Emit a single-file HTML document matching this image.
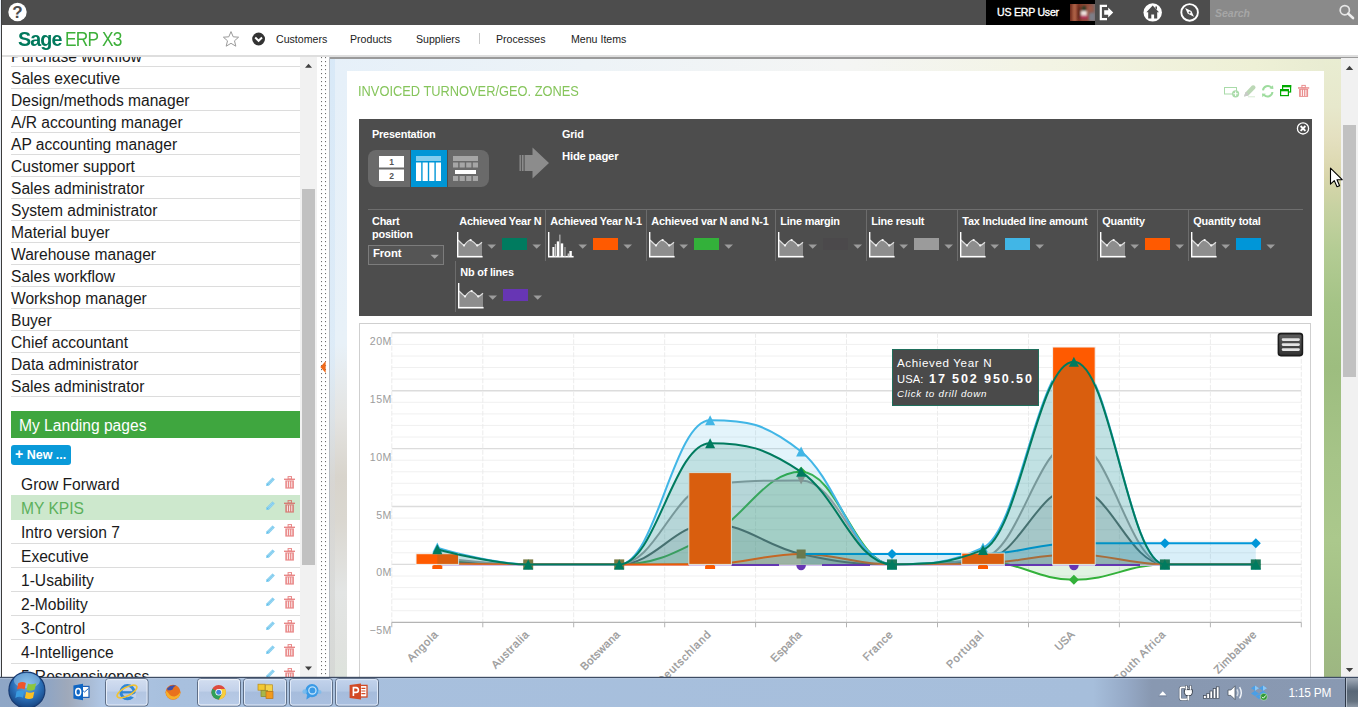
<!DOCTYPE html>
<html><head><meta charset="utf-8"><title>Sage ERP X3</title>
<style>
*{box-sizing:border-box;margin:0;padding:0}
html,body{width:1358px;height:707px;overflow:hidden;background:#fff;font-family:"Liberation Sans",sans-serif;}
body{position:relative}
.abs{position:absolute}
svg{position:absolute;overflow:visible}
#edge0{left:0;top:0;width:1px;height:677px;background:#e8eef6}
#edge1{left:1px;top:0;width:1px;height:677px;background:#3c3c3c}
#topbar{left:2px;top:0;width:1356px;height:25px;background:#4d4d4d}
#user{left:986px;top:0;width:109px;height:25px;background:#000;color:#fff;font-size:10.6px;-webkit-text-stroke:0.35px #fff;line-height:25px;padding-left:11px;letter-spacing:-0.25px}
#search{left:1210px;top:0;width:148px;height:25px;background:#8a8a8a;color:#a6a6a6;font-size:10.5px;font-style:italic;font-weight:bold;line-height:26px;padding-left:5px}
#nav{left:2px;top:25px;width:1356px;height:30px;background:#fff}
#navline{left:2px;top:55px;width:1356px;height:2px;background:#dedede}
.nv{position:absolute;top:33px;font-size:10.6px;color:#222;line-height:13px;white-space:nowrap}
#left{left:2px;top:57px;width:298px;height:620px;background:#fff;overflow:hidden}
.li{position:absolute;left:9px;width:289px;height:22px;border-bottom:1px solid #dcdcdc;font-size:15.6px;line-height:23.2px;color:#1a1a1a;white-space:nowrap}
.lp{position:absolute;left:9px;width:289px;height:24px;border-bottom:1px solid #dcdcdc;font-size:15.6px;line-height:25.6px;color:#1a1a1a;padding-left:10px;white-space:nowrap}
#lsb{left:300px;top:57px;width:17px;height:620px;background:#f1f1f1}
#lthumb{left:302px;top:189px;width:13px;height:376px;background:#c1c1c1}
#split{left:317px;top:57px;width:12px;height:620px;background:#fff}
#main{left:329px;top:57px;width:1029px;height:620px;overflow:hidden;background:#eef3f6}
#taskbar{left:0;top:677px;width:1358px;height:30px;background:#a9c0dd}
</style></head>
<body>
<div id="edge0" class="abs"></div><div id="edge1" class="abs"></div>
<div id="topbar" class="abs"></div>
<!-- help icon -->
<svg style="left:8px;top:2px" width="20" height="20" viewBox="0 0 20 20"><circle cx="9.5" cy="10" r="9.2" fill="#fff"/><text x="9.5" y="16" text-anchor="middle" font-family="Liberation Sans" font-weight="bold" font-size="17" fill="#4d4d4d">?</text></svg>
<div id="user" class="abs">US ERP User</div>
<!-- avatar -->
<svg style="left:1070px;top:4px;overflow:hidden" width="25" height="17" viewBox="0 0 25 17"><defs><linearGradient id="av" x1="0" x2="1"><stop offset="0" stop-color="#6e2a1c"/><stop offset=".2" stop-color="#a55a40"/><stop offset=".35" stop-color="#7a3324"/><stop offset=".5" stop-color="#8a4432"/><stop offset=".75" stop-color="#8e4c3c"/><stop offset="1" stop-color="#7d6a68"/></linearGradient><filter id="avb" x="-20%" y="-20%" width="140%" height="140%"><feGaussianBlur stdDeviation="0.9"/></filter></defs><rect width="25" height="17" fill="url(#av)"/><g filter="url(#avb)"><rect x="3" y="0" width="2" height="17" fill="#b8694c" opacity=".7"/><rect x="8" y="3" width="3" height="12" fill="#5a2418" opacity=".8"/><rect x="12" y="2" width="4" height="6" fill="#2e3a24"/><rect x="11" y="7" width="6" height="5" fill="#efe2de"/><rect x="10.5" y="11.5" width="7.5" height="3.5" fill="#b03058"/><rect x="19" y="9" width="6" height="8" fill="#7d7e88"/><rect x="18" y="2" width="5" height="6" fill="#9a5a48"/></g></svg>
<!-- logout -->
<svg style="left:1099px;top:4px" width="16" height="17" viewBox="0 0 16 17"><path d="M8 1.8H1.8V15.2H8" fill="none" stroke="#fff" stroke-width="2.2"/><path d="M5.2 6.2H9.2V3.6L14.2 8.5L9.2 13.4V10.8H5.2Z" fill="#fff"/></svg>
<!-- home -->
<svg style="left:1143px;top:3px" width="20" height="20" viewBox="0 0 20 20"><circle cx="9.7" cy="9.4" r="9.2" fill="#fff"/><path d="M9.7 2.6L3.4 9.2H5.2V15.6H8.3V11.6H11.1V15.6H14.2V9.2H16Z M12.4 3.4h1.6v3.2l-1.6-1.6z" fill="#4d4d4d"/></svg>
<!-- compass -->
<svg style="left:1180px;top:3px" width="20" height="20" viewBox="0 0 20 20"><circle cx="9.6" cy="9.4" r="8.3" fill="none" stroke="#fff" stroke-width="1.9"/><path d="M5.2 5L11.4 8L14 13.8L7.8 10.8Z" fill="#fff"/><circle cx="9.6" cy="9.4" r="1" fill="#4d4d4d"/></svg>
<div id="search" class="abs">Search</div>
<svg style="left:1336px;top:3px" width="20" height="18" viewBox="0 0 20 18"><circle cx="8.8" cy="7.2" r="4.6" fill="none" stroke="#e6e6e6" stroke-width="1.7"/><path d="M12.2 10.6L17 15" stroke="#eee" stroke-width="2.6" stroke-linecap="round"/></svg>
<div id="nav" class="abs"></div>
<div id="navline" class="abs"></div>
<!-- logo -->
<div class="abs" style="left:17.5px;top:27px;font-size:20px;line-height:24px;white-space:nowrap;letter-spacing:-0.9px;font-weight:bold;color:#00795c;transform:scaleX(.985);transform-origin:0 0">Sage</div>
<div class="abs" style="left:65px;top:27px;font-size:20px;line-height:24px;white-space:nowrap;letter-spacing:-0.9px;color:#3db03a;transform:scaleX(.865);transform-origin:0 0">ERP X3</div>
<!-- star -->
<svg style="left:222px;top:30px" width="18" height="18" viewBox="0 0 18 18"><path d="M9 1.6L11.2 6.8L16.6 7.2L12.5 10.8L13.8 16.2L9 13.3L4.2 16.2L5.5 10.8L1.4 7.2L6.8 6.8Z" fill="#fff" stroke="#9a9a9a" stroke-width="1"/></svg>
<!-- check circle -->
<svg style="left:252px;top:32px" width="14" height="14" viewBox="0 0 14 14"><circle cx="6.6" cy="7" r="6.4" fill="#333"/><path d="M3.2 5.6L6.6 8.8L10 5.6" fill="none" stroke="#fff" stroke-width="2"/></svg>
<div class="nv" style="left:276px">Customers</div>
<div class="nv" style="left:350px">Products</div>
<div class="nv" style="left:416px">Suppliers</div>
<div class="abs" style="left:479px;top:33px;width:1px;height:11px;background:#c8c8c8"></div>
<div class="nv" style="left:496px">Processes</div>
<div class="nv" style="left:571px">Menu Items</div>
<div id="left" class="abs">
<div class="li" style="top:-12px">Purchase workflow</div>
<div class="li" style="top:10px">Sales executive</div>
<div class="li" style="top:32px">Design/methods manager</div>
<div class="li" style="top:54px">A/R accounting manager</div>
<div class="li" style="top:76px">AP accounting manager</div>
<div class="li" style="top:98px">Customer support</div>
<div class="li" style="top:120px">Sales administrator</div>
<div class="li" style="top:142px">System administrator</div>
<div class="li" style="top:164px">Material buyer</div>
<div class="li" style="top:186px">Warehouse manager</div>
<div class="li" style="top:208px">Sales workflow</div>
<div class="li" style="top:230px">Workshop manager</div>
<div class="li" style="top:252px">Buyer</div>
<div class="li" style="top:274px">Chief accountant</div>
<div class="li" style="top:296px">Data administrator</div>
<div class="li" style="top:318px">Sales administrator</div>
<div class="abs" style="left:9px;top:354px;width:289px;height:27px;background:#3fa63f;color:#fff;font-size:15.6px;line-height:29px;padding-left:8px">My Landing pages</div>
<div class="abs" style="left:9px;top:388px;width:60px;height:20px;background:#0a9ad9;color:#fff;font-size:12.5px;font-weight:bold;line-height:19px;padding-left:4px;border-radius:3px;white-space:nowrap"><span style="font-size:14px">+</span> New ...</div>
<div class="lp" style="top:415px;border-bottom-color:#fff;">Grow Forward</div>
<svg style="left:263.2px;top:419px" width="11" height="11" viewBox="0 0 11 11"><path d="M1 10L1.8 7.2L7.6 1.4L9.8 3.6L4 9.4Z" fill="#5bbdea"/><path d="M2.6 7.8L8.2 2.2M3.6 8.8L9.2 3.2" stroke="#fff" stroke-width=".6"/><path d="M1 10L1.5 8.2L2.8 9.5Z" fill="#9adbf5"/></svg>
<svg style="left:282px;top:419px" width="11" height="13" viewBox="0 0 11 13"><rect x="4.1" y="0.6" width="3.4" height="2.4" fill="none" stroke="#e98888" stroke-width="1"/><path d="M0 2.6H11V4H0Z" fill="#e98888"/><path d="M1.3 4.4H9.9V12.6H1.3Z" fill="#e98888"/><path d="M3.4 5.4V11.4M5.6 5.4V11.4M7.8 5.4V11.4" stroke="#fff" stroke-width="0.9" opacity=".95"/></svg>
<div class="lp" style="top:438px;height:25px;background:#cde8cd;color:#5cb05c;border-bottom-color:#cde8cd;line-height:27.6px">MY KPIS</div>
<svg style="left:263.2px;top:443px" width="11" height="11" viewBox="0 0 11 11"><path d="M1 10L1.8 7.2L7.6 1.4L9.8 3.6L4 9.4Z" fill="#5bbdea"/><path d="M2.6 7.8L8.2 2.2M3.6 8.8L9.2 3.2" stroke="#fff" stroke-width=".6"/><path d="M1 10L1.5 8.2L2.8 9.5Z" fill="#9adbf5"/></svg>
<svg style="left:282px;top:443px" width="11" height="13" viewBox="0 0 11 13"><rect x="4.1" y="0.6" width="3.4" height="2.4" fill="none" stroke="#d67e76" stroke-width="1"/><path d="M0 2.6H11V4H0Z" fill="#d67e76"/><path d="M1.3 4.4H9.9V12.6H1.3Z" fill="#d67e76"/><path d="M3.4 5.4V11.4M5.6 5.4V11.4M7.8 5.4V11.4" stroke="#fff" stroke-width="0.9" opacity=".95"/></svg>
<div class="lp" style="top:463px;">Intro version 7</div>
<svg style="left:263.2px;top:467px" width="11" height="11" viewBox="0 0 11 11"><path d="M1 10L1.8 7.2L7.6 1.4L9.8 3.6L4 9.4Z" fill="#5bbdea"/><path d="M2.6 7.8L8.2 2.2M3.6 8.8L9.2 3.2" stroke="#fff" stroke-width=".6"/><path d="M1 10L1.5 8.2L2.8 9.5Z" fill="#9adbf5"/></svg>
<svg style="left:282px;top:467px" width="11" height="13" viewBox="0 0 11 13"><rect x="4.1" y="0.6" width="3.4" height="2.4" fill="none" stroke="#e98888" stroke-width="1"/><path d="M0 2.6H11V4H0Z" fill="#e98888"/><path d="M1.3 4.4H9.9V12.6H1.3Z" fill="#e98888"/><path d="M3.4 5.4V11.4M5.6 5.4V11.4M7.8 5.4V11.4" stroke="#fff" stroke-width="0.9" opacity=".95"/></svg>
<div class="lp" style="top:487px;">Executive</div>
<svg style="left:263.2px;top:491px" width="11" height="11" viewBox="0 0 11 11"><path d="M1 10L1.8 7.2L7.6 1.4L9.8 3.6L4 9.4Z" fill="#5bbdea"/><path d="M2.6 7.8L8.2 2.2M3.6 8.8L9.2 3.2" stroke="#fff" stroke-width=".6"/><path d="M1 10L1.5 8.2L2.8 9.5Z" fill="#9adbf5"/></svg>
<svg style="left:282px;top:491px" width="11" height="13" viewBox="0 0 11 13"><rect x="4.1" y="0.6" width="3.4" height="2.4" fill="none" stroke="#e98888" stroke-width="1"/><path d="M0 2.6H11V4H0Z" fill="#e98888"/><path d="M1.3 4.4H9.9V12.6H1.3Z" fill="#e98888"/><path d="M3.4 5.4V11.4M5.6 5.4V11.4M7.8 5.4V11.4" stroke="#fff" stroke-width="0.9" opacity=".95"/></svg>
<div class="lp" style="top:511px;">1-Usability</div>
<svg style="left:263.2px;top:515px" width="11" height="11" viewBox="0 0 11 11"><path d="M1 10L1.8 7.2L7.6 1.4L9.8 3.6L4 9.4Z" fill="#5bbdea"/><path d="M2.6 7.8L8.2 2.2M3.6 8.8L9.2 3.2" stroke="#fff" stroke-width=".6"/><path d="M1 10L1.5 8.2L2.8 9.5Z" fill="#9adbf5"/></svg>
<svg style="left:282px;top:515px" width="11" height="13" viewBox="0 0 11 13"><rect x="4.1" y="0.6" width="3.4" height="2.4" fill="none" stroke="#e98888" stroke-width="1"/><path d="M0 2.6H11V4H0Z" fill="#e98888"/><path d="M1.3 4.4H9.9V12.6H1.3Z" fill="#e98888"/><path d="M3.4 5.4V11.4M5.6 5.4V11.4M7.8 5.4V11.4" stroke="#fff" stroke-width="0.9" opacity=".95"/></svg>
<div class="lp" style="top:535px;">2-Mobility</div>
<svg style="left:263.2px;top:539px" width="11" height="11" viewBox="0 0 11 11"><path d="M1 10L1.8 7.2L7.6 1.4L9.8 3.6L4 9.4Z" fill="#5bbdea"/><path d="M2.6 7.8L8.2 2.2M3.6 8.8L9.2 3.2" stroke="#fff" stroke-width=".6"/><path d="M1 10L1.5 8.2L2.8 9.5Z" fill="#9adbf5"/></svg>
<svg style="left:282px;top:539px" width="11" height="13" viewBox="0 0 11 13"><rect x="4.1" y="0.6" width="3.4" height="2.4" fill="none" stroke="#e98888" stroke-width="1"/><path d="M0 2.6H11V4H0Z" fill="#e98888"/><path d="M1.3 4.4H9.9V12.6H1.3Z" fill="#e98888"/><path d="M3.4 5.4V11.4M5.6 5.4V11.4M7.8 5.4V11.4" stroke="#fff" stroke-width="0.9" opacity=".95"/></svg>
<div class="lp" style="top:559px;">3-Control</div>
<svg style="left:263.2px;top:563px" width="11" height="11" viewBox="0 0 11 11"><path d="M1 10L1.8 7.2L7.6 1.4L9.8 3.6L4 9.4Z" fill="#5bbdea"/><path d="M2.6 7.8L8.2 2.2M3.6 8.8L9.2 3.2" stroke="#fff" stroke-width=".6"/><path d="M1 10L1.5 8.2L2.8 9.5Z" fill="#9adbf5"/></svg>
<svg style="left:282px;top:563px" width="11" height="13" viewBox="0 0 11 13"><rect x="4.1" y="0.6" width="3.4" height="2.4" fill="none" stroke="#e98888" stroke-width="1"/><path d="M0 2.6H11V4H0Z" fill="#e98888"/><path d="M1.3 4.4H9.9V12.6H1.3Z" fill="#e98888"/><path d="M3.4 5.4V11.4M5.6 5.4V11.4M7.8 5.4V11.4" stroke="#fff" stroke-width="0.9" opacity=".95"/></svg>
<div class="lp" style="top:583px;">4-Intelligence</div>
<svg style="left:263.2px;top:587px" width="11" height="11" viewBox="0 0 11 11"><path d="M1 10L1.8 7.2L7.6 1.4L9.8 3.6L4 9.4Z" fill="#5bbdea"/><path d="M2.6 7.8L8.2 2.2M3.6 8.8L9.2 3.2" stroke="#fff" stroke-width=".6"/><path d="M1 10L1.5 8.2L2.8 9.5Z" fill="#9adbf5"/></svg>
<svg style="left:282px;top:587px" width="11" height="13" viewBox="0 0 11 13"><rect x="4.1" y="0.6" width="3.4" height="2.4" fill="none" stroke="#e98888" stroke-width="1"/><path d="M0 2.6H11V4H0Z" fill="#e98888"/><path d="M1.3 4.4H9.9V12.6H1.3Z" fill="#e98888"/><path d="M3.4 5.4V11.4M5.6 5.4V11.4M7.8 5.4V11.4" stroke="#fff" stroke-width="0.9" opacity=".95"/></svg>
<div class="lp" style="top:607px;">5-Responsiveness</div>
<svg style="left:263.2px;top:611px" width="11" height="11" viewBox="0 0 11 11"><path d="M1 10L1.8 7.2L7.6 1.4L9.8 3.6L4 9.4Z" fill="#5bbdea"/><path d="M2.6 7.8L8.2 2.2M3.6 8.8L9.2 3.2" stroke="#fff" stroke-width=".6"/><path d="M1 10L1.5 8.2L2.8 9.5Z" fill="#9adbf5"/></svg>
<svg style="left:282px;top:611px" width="11" height="13" viewBox="0 0 11 13"><rect x="4.1" y="0.6" width="3.4" height="2.4" fill="none" stroke="#e98888" stroke-width="1"/><path d="M0 2.6H11V4H0Z" fill="#e98888"/><path d="M1.3 4.4H9.9V12.6H1.3Z" fill="#e98888"/><path d="M3.4 5.4V11.4M5.6 5.4V11.4M7.8 5.4V11.4" stroke="#fff" stroke-width="0.9" opacity=".95"/></svg>
</div>
<div id="lsb" class="abs"></div><div id="lthumb" class="abs"></div>
<svg style="left:300px;top:57px" width="17" height="620"><path d="M5 10.8L8.5 6.8L12 10.8Z" fill="#404040"/><path d="M5 609.4L8.5 613.4L12 609.4Z" fill="#404040"/></svg>
<div id="split" class="abs"></div>
<svg style="left:317px;top:57px" width="12" height="620"><defs><pattern id="dots" x="0" y="0" width="4" height="4" patternUnits="userSpaceOnUse"><rect x="0" y="0" width="1.15" height="1.15" fill="#6c6c6c"/></pattern></defs><rect x="4" y="0" width="1.3" height="620" fill="url(#dots)"/><rect x="8" y="0" width="1.3" height="620" fill="url(#dots)"/><path d="M8.6 304L3.4 310L8.6 316Z" fill="#f06a1a"/></svg>
<div id="main" class="abs">
<div class="abs" style="left:0;top:0;width:1029px;height:620px;background:linear-gradient(90deg,#e6f0f9 0%,#edf3f7 25%,#f4f5f4 50%,#f3f4e4 70%,#eef0d6 90%,#e6ead0 100%)"></div>
<div class="abs" style="left:0;top:14px;width:18px;height:606px;background:linear-gradient(180deg,#e6f0f9 0%,#e8f1f8 45%,#e4e4e2 57%,#d8d4cc 67%,#dad7d0 74%,#e3e5e4 86%,#e0e2df 95%,#dde3dc 100%)"></div>
<div class="abs" style="left:0;top:0;width:6px;height:620px;background:linear-gradient(180deg,rgba(215,232,247,.9),rgba(215,232,247,.6) 50%,rgba(214,214,214,.5) 70%,rgba(212,214,212,.8))"></div>
<div class="abs" style="left:995px;top:0;width:17px;height:620px;background:linear-gradient(180deg,#e9edd2 0%,#e7e8cc 8%,#e4e0c0 13%,#dad6ac 19%,#c8d2a2 24%,#b4cc94 31%,#a4c386 40%,#9dbd7f 50%,#a6c488 65%,#abc88c 78%,#a2bf84 90%,#9db682 100%)"></div>
<div class="abs" style="left:0;top:0;width:1029px;height:1.8px;background:#9a9a9a"></div>
<div class="abs" style="left:0;top:0;width:1px;height:620px;background:#b9bec4"></div>
<!-- white panel -->
<div class="abs" style="left:18px;top:14px;width:977px;height:606px;background:#fff"></div>
<!-- right scrollbar -->
<div class="abs" style="left:1012px;top:1px;width:17px;height:620px;background:#f1f1f1"></div>
<div class="abs" style="left:1014px;top:68px;width:13px;height:252px;background:#c1c1c1"></div>
<svg style="left:1012px;top:0" width="17" height="619"><path d="M4.8 13L8.5 8.8L12.2 13Z" fill="#404040"/><path d="M4.8 611L8.5 615L12.2 611Z" fill="#404040"/></svg>
</div>
<div class="abs" style="left:358px;top:83px;font-size:14.3px;line-height:17.6px;color:#86c55c;white-space:nowrap;transform:scaleX(.898);transform-origin:0 0">INVOICED TURNOVER/GEO. ZONES</div>
<svg style="left:1223px;top:84px" width="16" height="14" viewBox="0 0 16 14"><rect x="1.5" y="3.5" width="12" height="6.5" fill="#fff" stroke="#a9dba9" stroke-width="1"/><circle cx="12.6" cy="9.8" r="3.6" fill="#a9dba9"/><path d="M12.6 7.6V12M10.4 9.8H14.8" stroke="#fff" stroke-width="1.1"/></svg>
<svg style="left:1243px;top:84px" width="14" height="14" viewBox="0 0 14 14"><path d="M1 12.6L2.4 8.4L9 1.6Q10.6 0.6 12 2Q13.2 3.4 12 4.8L5.4 11.6Z" fill="#bcd8b6"/><path d="M1 12.6L2.4 8.4L4 8L5 10L5.4 11.6Z" fill="#c9c9c9"/><path d="M5 12.8H12" stroke="#d6ead2" stroke-width="1"/></svg>
<svg style="left:1261px;top:84px" width="14" height="14" viewBox="0 0 14 14"><path d="M2 6.4A4.8 4.8 0 0 1 10.4 3.6" fill="none" stroke="#9edc9e" stroke-width="2"/><path d="M8.6 4.6L12.4 5L12 1.2Z" fill="#9edc9e"/><path d="M11.4 8A4.8 4.8 0 0 1 3 10.8" fill="none" stroke="#9edc9e" stroke-width="2"/><path d="M4.8 9.8L1 9.4L1.4 13.2Z" fill="#9edc9e"/></svg>
<svg style="left:1279px;top:84px" width="14" height="14" viewBox="0 0 14 14"><rect x="3.6" y="1.6" width="8" height="6.4" fill="#fff" stroke="#0a0" stroke-width="1.2"/><rect x="3" y="1" width="9.2" height="2.3" fill="#0a0"/><rect x="1.6" y="5.6" width="7.8" height="6" fill="#fff" stroke="#0a0" stroke-width="1.2"/><rect x="1" y="5" width="9" height="2.3" fill="#0a0"/></svg>
<svg style="left:1297px;top:84px" width="14" height="14" viewBox="0 0 14 14"><rect x="4.9" y="1.4" width="3.4" height="2.4" fill="none" stroke="#ea8f8f" stroke-width="1"/><path d="M1 3.2H12.2V4.7H1Z" fill="#ea8f8f"/><path d="M2.1 5H11.1V12.9H2.1Z" fill="#ea8f8f"/><path d="M4.3 5.8V12M6.6 5.8V12M8.9 5.8V12" stroke="#fff" stroke-width="1"/></svg>
<div class="abs" style="left:359px;top:119px;width:953px;height:197px;background:#4d4d4d"></div>
<svg style="left:1295px;top:121px" width="16" height="16" viewBox="0 0 16 16"><circle cx="8" cy="7.4" r="5.6" fill="none" stroke="#fff" stroke-width="1.3"/><path d="M5.6 5L10.4 9.8M10.4 5L5.6 9.8" stroke="#fff" stroke-width="1.9"/></svg>
<div style="position:absolute;color:#fff;font-weight:bold;font-size:10.9px;line-height:13px;white-space:nowrap;letter-spacing:-0.2px;left:372px;top:128px">Presentation</div>
<div style="position:absolute;color:#fff;font-weight:bold;font-size:10.9px;line-height:13px;white-space:nowrap;letter-spacing:-0.2px;left:562px;top:128px">Grid</div>
<div style="position:absolute;color:#fff;font-weight:bold;font-size:10.9px;line-height:13px;white-space:nowrap;letter-spacing:-0.2px;left:562px;top:150px;font-size:11.3px">Hide pager</div>
<div class="abs" style="left:368px;top:150px;width:121px;height:37px;background:#6a6a6a;border-radius:8px;overflow:hidden">
<div class="abs" style="left:42px;top:0;width:1px;height:37px;background:#4d4d4d"></div>
<div class="abs" style="left:43px;top:0;width:36px;height:37px;background:#0096d6"></div>
<div class="abs" style="left:79px;top:0;width:1px;height:37px;background:#4d4d4d"></div>
</div>
<svg style="left:368px;top:150px" width="121" height="37" viewBox="0 0 121 37">
<rect x="11" y="6" width="25" height="11.5" fill="#fff"/><rect x="11" y="19.5" width="25" height="11.5" fill="#fff"/>
<text x="23.5" y="15.2" text-anchor="middle" font-family="Liberation Sans" font-weight="bold" font-size="8.5" fill="#555">1</text>
<text x="23.5" y="28.7" text-anchor="middle" font-family="Liberation Sans" font-weight="bold" font-size="8.5" fill="#555">2</text>
<rect x="48" y="6" width="25" height="5" fill="#82cdee"/>
<rect x="48" y="12.5" width="5.2" height="18.5" fill="#fff"/><rect x="54.6" y="12.5" width="5.2" height="18.5" fill="#fff"/><rect x="61.2" y="12.5" width="5.2" height="18.5" fill="#fff"/><rect x="67.8" y="12.5" width="5.2" height="18.5" fill="#fff"/>
<rect x="85" y="6" width="25" height="5" fill="#a6a6a6"/>
<rect x="85" y="12.5" width="5.2" height="5" fill="#a6a6a6"/><rect x="91.6" y="12.5" width="5.2" height="5" fill="#a6a6a6"/><rect x="98.2" y="12.5" width="5.2" height="5" fill="#a6a6a6"/><rect x="104.8" y="12.5" width="5.2" height="5" fill="#a6a6a6"/>
<rect x="87" y="20" width="21" height="4" fill="#fff"/>
<rect x="85" y="26" width="5.2" height="5" fill="#a6a6a6"/><rect x="91.6" y="26" width="5.2" height="5" fill="#a6a6a6"/><rect x="98.2" y="26" width="5.2" height="5" fill="#a6a6a6"/><rect x="104.8" y="26" width="5.2" height="5" fill="#a6a6a6"/>
</svg>
<svg style="left:519px;top:147px" width="31" height="33" viewBox="0 0 31 33"><rect x="0.5" y="8" width="1.4" height="16" fill="#8c8c8c"/><rect x="2.8" y="8" width="1.8" height="16" fill="#8c8c8c"/><path d="M5.6 8H13.5V0.5L30 16L13.5 31.5V24H5.6Z" fill="#8c8c8c"/></svg>
<div class="abs" style="left:368px;top:209px;width:935px;height:1px;background:#6e6e6e"></div>
<div style="position:absolute;color:#fff;font-weight:bold;font-size:10.9px;line-height:13px;white-space:nowrap;letter-spacing:-0.2px;left:372px;top:215px;line-height:13px">Chart<br>position</div>
<div class="abs" style="left:368px;top:245px;width:76px;height:20px;border:1px solid #7c7c7c;background:#555;color:#fff;font-size:11.3px;line-height:14.5px;padding-left:4px;font-weight:bold;letter-spacing:-0.1px">Front</div>
<svg style="left:430px;top:254px" width="10" height="6"><path d="M0.5 0.8H8.9L4.7 4.8Z" fill="#a0a0a0"/></svg>
<div style="position:absolute;color:#fff;font-weight:bold;font-size:10.9px;line-height:13px;white-space:nowrap;letter-spacing:-0.2px;left:459.3px;top:215px">Achieved Year N</div>
<svg style="left:456.5px;top:232px" width="26" height="26" viewBox="0 0 26 26"><path d="M1 8Q4 11 7 13.6Q10.5 8.6 13.6 8Q17 10 20.2 13.6Q22.5 12.6 25 10.2V24.5H1Z" fill="#8d8d8d"/><path d="M1 8Q4 11 7 13.6Q10.5 8.6 13.6 8Q17 10 20.2 13.6Q22.5 12.6 25 10.2" fill="none" stroke="#dedede" stroke-width="1.2"/><circle cx="7" cy="13.4" r="1.1" fill="#f4f4f4"/><circle cx="13.6" cy="8.1" r="1.1" fill="#f4f4f4"/><circle cx="20.2" cy="13.4" r="1.1" fill="#f4f4f4"/><path d="M0.7 0V25" stroke="#fff" stroke-width="1.4"/><path d="M0 24.7H25.6" stroke="#fff" stroke-width="1.6"/></svg>
<svg style="left:487px;top:244px" width="10" height="6"><path d="M0.4 0.6H9L4.7 4.8Z" fill="#9c9c9c"/></svg>
<div class="abs" style="left:502px;top:238px;width:25px;height:12px;background:#007b5f"></div>
<svg style="left:532px;top:244px" width="10" height="6"><path d="M0.4 0.6H9L4.7 4.8Z" fill="#9c9c9c"/></svg>
<div class="abs" style="left:545.3px;top:210px;width:1px;height:51px;background:#6c6c6c"></div>
<div style="position:absolute;color:#fff;font-weight:bold;font-size:10.9px;line-height:13px;white-space:nowrap;letter-spacing:-0.2px;left:550.3px;top:215px">Achieved Year N-1</div>
<svg style="left:547.5px;top:232px" width="26" height="26" viewBox="0 0 26 26"><path d="M0.7 0V25" stroke="#fff" stroke-width="1.4"/><path d="M0 24.7H25.6" stroke="#fff" stroke-width="1.6"/><g fill="#fff"><rect x="4.4" y="15" width="2" height="9.5"/><rect x="6.8" y="12" width="1.4" height="12.5" fill="#c4c4c4"/><rect x="8.8" y="9.4" width="2.2" height="15"/><rect x="11.2" y="2.6" width="1.3" height="22" fill="#b0b0b0"/><rect x="12.8" y="11.4" width="2.4" height="13"/><rect x="16.4" y="15" width="1.2" height="9.5" fill="#aaa"/><rect x="19.6" y="21.5" width="1.6" height="3" fill="#ccc"/><rect x="21.4" y="19" width="2.4" height="5.5"/></g></svg>
<svg style="left:578px;top:244px" width="10" height="6"><path d="M0.4 0.6H9L4.7 4.8Z" fill="#9c9c9c"/></svg>
<div class="abs" style="left:593px;top:238px;width:25px;height:12px;background:#ff5a00"></div>
<svg style="left:623px;top:244px" width="10" height="6"><path d="M0.4 0.6H9L4.7 4.8Z" fill="#9c9c9c"/></svg>
<div class="abs" style="left:646.3px;top:210px;width:1px;height:51px;background:#6c6c6c"></div>
<div style="position:absolute;color:#fff;font-weight:bold;font-size:10.9px;line-height:13px;white-space:nowrap;letter-spacing:-0.2px;left:651.3px;top:215px">Achieved var N and N-1</div>
<svg style="left:648.5px;top:232px" width="26" height="26" viewBox="0 0 26 26"><path d="M1 8Q4 11 7 13.6Q10.5 8.6 13.6 8Q17 10 20.2 13.6Q22.5 12.6 25 10.2V24.5H1Z" fill="#8d8d8d"/><path d="M1 8Q4 11 7 13.6Q10.5 8.6 13.6 8Q17 10 20.2 13.6Q22.5 12.6 25 10.2" fill="none" stroke="#dedede" stroke-width="1.2"/><circle cx="7" cy="13.4" r="1.1" fill="#f4f4f4"/><circle cx="13.6" cy="8.1" r="1.1" fill="#f4f4f4"/><circle cx="20.2" cy="13.4" r="1.1" fill="#f4f4f4"/><path d="M0.7 0V25" stroke="#fff" stroke-width="1.4"/><path d="M0 24.7H25.6" stroke="#fff" stroke-width="1.6"/></svg>
<svg style="left:679px;top:244px" width="10" height="6"><path d="M0.4 0.6H9L4.7 4.8Z" fill="#9c9c9c"/></svg>
<div class="abs" style="left:694px;top:238px;width:25px;height:12px;background:#33b13a"></div>
<svg style="left:724px;top:244px" width="10" height="6"><path d="M0.4 0.6H9L4.7 4.8Z" fill="#9c9c9c"/></svg>
<div class="abs" style="left:775.3px;top:210px;width:1px;height:51px;background:#6c6c6c"></div>
<div style="position:absolute;color:#fff;font-weight:bold;font-size:10.9px;line-height:13px;white-space:nowrap;letter-spacing:-0.2px;left:780.3px;top:215px">Line margin</div>
<svg style="left:777.5px;top:232px" width="26" height="26" viewBox="0 0 26 26"><path d="M1 8Q4 11 7 13.6Q10.5 8.6 13.6 8Q17 10 20.2 13.6Q22.5 12.6 25 10.2V24.5H1Z" fill="#8d8d8d"/><path d="M1 8Q4 11 7 13.6Q10.5 8.6 13.6 8Q17 10 20.2 13.6Q22.5 12.6 25 10.2" fill="none" stroke="#dedede" stroke-width="1.2"/><circle cx="7" cy="13.4" r="1.1" fill="#f4f4f4"/><circle cx="13.6" cy="8.1" r="1.1" fill="#f4f4f4"/><circle cx="20.2" cy="13.4" r="1.1" fill="#f4f4f4"/><path d="M0.7 0V25" stroke="#fff" stroke-width="1.4"/><path d="M0 24.7H25.6" stroke="#fff" stroke-width="1.6"/></svg>
<svg style="left:808px;top:244px" width="10" height="6"><path d="M0.4 0.6H9L4.7 4.8Z" fill="#9c9c9c"/></svg>
<div class="abs" style="left:823px;top:238px;width:25px;height:12px;background:#4b494b"></div>
<svg style="left:853px;top:244px" width="10" height="6"><path d="M0.4 0.6H9L4.7 4.8Z" fill="#9c9c9c"/></svg>
<div class="abs" style="left:866.3px;top:210px;width:1px;height:51px;background:#6c6c6c"></div>
<div style="position:absolute;color:#fff;font-weight:bold;font-size:10.9px;line-height:13px;white-space:nowrap;letter-spacing:-0.2px;left:871.3px;top:215px">Line result</div>
<svg style="left:868.5px;top:232px" width="26" height="26" viewBox="0 0 26 26"><path d="M1 8Q4 11 7 13.6Q10.5 8.6 13.6 8Q17 10 20.2 13.6Q22.5 12.6 25 10.2V24.5H1Z" fill="#8d8d8d"/><path d="M1 8Q4 11 7 13.6Q10.5 8.6 13.6 8Q17 10 20.2 13.6Q22.5 12.6 25 10.2" fill="none" stroke="#dedede" stroke-width="1.2"/><circle cx="7" cy="13.4" r="1.1" fill="#f4f4f4"/><circle cx="13.6" cy="8.1" r="1.1" fill="#f4f4f4"/><circle cx="20.2" cy="13.4" r="1.1" fill="#f4f4f4"/><path d="M0.7 0V25" stroke="#fff" stroke-width="1.4"/><path d="M0 24.7H25.6" stroke="#fff" stroke-width="1.6"/></svg>
<svg style="left:899px;top:244px" width="10" height="6"><path d="M0.4 0.6H9L4.7 4.8Z" fill="#9c9c9c"/></svg>
<div class="abs" style="left:914px;top:238px;width:25px;height:12px;background:#9b9b9b"></div>
<svg style="left:944px;top:244px" width="10" height="6"><path d="M0.4 0.6H9L4.7 4.8Z" fill="#9c9c9c"/></svg>
<div class="abs" style="left:957.3px;top:210px;width:1px;height:51px;background:#6c6c6c"></div>
<div style="position:absolute;color:#fff;font-weight:bold;font-size:10.9px;line-height:13px;white-space:nowrap;letter-spacing:-0.2px;left:962.3px;top:215px">Tax Included line amount</div>
<svg style="left:959.5px;top:232px" width="26" height="26" viewBox="0 0 26 26"><path d="M1 8Q4 11 7 13.6Q10.5 8.6 13.6 8Q17 10 20.2 13.6Q22.5 12.6 25 10.2V24.5H1Z" fill="#8d8d8d"/><path d="M1 8Q4 11 7 13.6Q10.5 8.6 13.6 8Q17 10 20.2 13.6Q22.5 12.6 25 10.2" fill="none" stroke="#dedede" stroke-width="1.2"/><circle cx="7" cy="13.4" r="1.1" fill="#f4f4f4"/><circle cx="13.6" cy="8.1" r="1.1" fill="#f4f4f4"/><circle cx="20.2" cy="13.4" r="1.1" fill="#f4f4f4"/><path d="M0.7 0V25" stroke="#fff" stroke-width="1.4"/><path d="M0 24.7H25.6" stroke="#fff" stroke-width="1.6"/></svg>
<svg style="left:990px;top:244px" width="10" height="6"><path d="M0.4 0.6H9L4.7 4.8Z" fill="#9c9c9c"/></svg>
<div class="abs" style="left:1005px;top:238px;width:25px;height:12px;background:#41b6e6"></div>
<svg style="left:1035px;top:244px" width="10" height="6"><path d="M0.4 0.6H9L4.7 4.8Z" fill="#9c9c9c"/></svg>
<div class="abs" style="left:1097.3px;top:210px;width:1px;height:51px;background:#6c6c6c"></div>
<div style="position:absolute;color:#fff;font-weight:bold;font-size:10.9px;line-height:13px;white-space:nowrap;letter-spacing:-0.2px;left:1102.3px;top:215px">Quantity</div>
<svg style="left:1099.5px;top:232px" width="26" height="26" viewBox="0 0 26 26"><path d="M1 8Q4 11 7 13.6Q10.5 8.6 13.6 8Q17 10 20.2 13.6Q22.5 12.6 25 10.2V24.5H1Z" fill="#8d8d8d"/><path d="M1 8Q4 11 7 13.6Q10.5 8.6 13.6 8Q17 10 20.2 13.6Q22.5 12.6 25 10.2" fill="none" stroke="#dedede" stroke-width="1.2"/><circle cx="7" cy="13.4" r="1.1" fill="#f4f4f4"/><circle cx="13.6" cy="8.1" r="1.1" fill="#f4f4f4"/><circle cx="20.2" cy="13.4" r="1.1" fill="#f4f4f4"/><path d="M0.7 0V25" stroke="#fff" stroke-width="1.4"/><path d="M0 24.7H25.6" stroke="#fff" stroke-width="1.6"/></svg>
<svg style="left:1130px;top:244px" width="10" height="6"><path d="M0.4 0.6H9L4.7 4.8Z" fill="#9c9c9c"/></svg>
<div class="abs" style="left:1145px;top:238px;width:25px;height:12px;background:#ff5a00"></div>
<svg style="left:1175px;top:244px" width="10" height="6"><path d="M0.4 0.6H9L4.7 4.8Z" fill="#9c9c9c"/></svg>
<div class="abs" style="left:1188.3px;top:210px;width:1px;height:51px;background:#6c6c6c"></div>
<div style="position:absolute;color:#fff;font-weight:bold;font-size:10.9px;line-height:13px;white-space:nowrap;letter-spacing:-0.2px;left:1193.3px;top:215px">Quantity total</div>
<svg style="left:1190.5px;top:232px" width="26" height="26" viewBox="0 0 26 26"><path d="M1 8Q4 11 7 13.6Q10.5 8.6 13.6 8Q17 10 20.2 13.6Q22.5 12.6 25 10.2V24.5H1Z" fill="#8d8d8d"/><path d="M1 8Q4 11 7 13.6Q10.5 8.6 13.6 8Q17 10 20.2 13.6Q22.5 12.6 25 10.2" fill="none" stroke="#dedede" stroke-width="1.2"/><circle cx="7" cy="13.4" r="1.1" fill="#f4f4f4"/><circle cx="13.6" cy="8.1" r="1.1" fill="#f4f4f4"/><circle cx="20.2" cy="13.4" r="1.1" fill="#f4f4f4"/><path d="M0.7 0V25" stroke="#fff" stroke-width="1.4"/><path d="M0 24.7H25.6" stroke="#fff" stroke-width="1.6"/></svg>
<svg style="left:1221px;top:244px" width="10" height="6"><path d="M0.4 0.6H9L4.7 4.8Z" fill="#9c9c9c"/></svg>
<div class="abs" style="left:1236px;top:238px;width:25px;height:12px;background:#0096d8"></div>
<svg style="left:1266px;top:244px" width="10" height="6"><path d="M0.4 0.6H9L4.7 4.8Z" fill="#9c9c9c"/></svg>
<div class="abs" style="left:455.3px;top:261px;width:1px;height:51px;background:#6c6c6c"></div>
<div style="position:absolute;color:#fff;font-weight:bold;font-size:10.9px;line-height:13px;white-space:nowrap;letter-spacing:-0.2px;left:460.3px;top:266px">Nb of lines</div>
<svg style="left:457.5px;top:283px" width="26" height="26" viewBox="0 0 26 26"><path d="M1 8Q4 11 7 13.6Q10.5 8.6 13.6 8Q17 10 20.2 13.6Q22.5 12.6 25 10.2V24.5H1Z" fill="#8d8d8d"/><path d="M1 8Q4 11 7 13.6Q10.5 8.6 13.6 8Q17 10 20.2 13.6Q22.5 12.6 25 10.2" fill="none" stroke="#dedede" stroke-width="1.2"/><circle cx="7" cy="13.4" r="1.1" fill="#f4f4f4"/><circle cx="13.6" cy="8.1" r="1.1" fill="#f4f4f4"/><circle cx="20.2" cy="13.4" r="1.1" fill="#f4f4f4"/><path d="M0.7 0V25" stroke="#fff" stroke-width="1.4"/><path d="M0 24.7H25.6" stroke="#fff" stroke-width="1.6"/></svg>
<svg style="left:488px;top:295px" width="10" height="6"><path d="M0.4 0.6H9L4.7 4.8Z" fill="#9c9c9c"/></svg>
<div class="abs" style="left:503px;top:289px;width:25px;height:12px;background:#6736b4"></div>
<svg style="left:533px;top:295px" width="10" height="6"><path d="M0.4 0.6H9L4.7 4.8Z" fill="#9c9c9c"/></svg>
<svg style="left:1329px;top:167px" width="15" height="22" viewBox="0 0 15 22"><path d="M1.5 1.2V17.2L5.3 13.6L8 19.8L10.6 18.7L8 12.7H13.2Z" fill="#fff" stroke="#000" stroke-width="1.1" stroke-linejoin="round"/></svg><!--cursor-->
<svg style="left:0;top:0;overflow:hidden" width="1358" height="677" viewBox="0 0 1358 677">
<rect x="359.5" y="323.5" width="951" height="360" fill="#fff" stroke="#cfcfcf" stroke-width="1"/>
<path d="M391.8 610.7H1301.3" stroke="#f0f0f0" stroke-width="1"/>
<path d="M391.8 599.1H1301.3" stroke="#f0f0f0" stroke-width="1"/>
<path d="M391.8 587.6H1301.3" stroke="#f0f0f0" stroke-width="1"/>
<path d="M391.8 576.0H1301.3" stroke="#f0f0f0" stroke-width="1"/>
<path d="M391.8 564.4H1301.3" stroke="#dcdcdc" stroke-width="1.4"/>
<path d="M391.8 552.8H1301.3" stroke="#f0f0f0" stroke-width="1"/>
<path d="M391.8 541.2H1301.3" stroke="#f0f0f0" stroke-width="1"/>
<path d="M391.8 529.7H1301.3" stroke="#f0f0f0" stroke-width="1"/>
<path d="M391.8 518.1H1301.3" stroke="#f0f0f0" stroke-width="1"/>
<path d="M391.8 506.5H1301.3" stroke="#dcdcdc" stroke-width="1.4"/>
<path d="M391.8 494.9H1301.3" stroke="#f0f0f0" stroke-width="1"/>
<path d="M391.8 483.3H1301.3" stroke="#f0f0f0" stroke-width="1"/>
<path d="M391.8 471.8H1301.3" stroke="#f0f0f0" stroke-width="1"/>
<path d="M391.8 460.2H1301.3" stroke="#f0f0f0" stroke-width="1"/>
<path d="M391.8 448.6H1301.3" stroke="#dcdcdc" stroke-width="1.4"/>
<path d="M391.8 437.0H1301.3" stroke="#f0f0f0" stroke-width="1"/>
<path d="M391.8 425.4H1301.3" stroke="#f0f0f0" stroke-width="1"/>
<path d="M391.8 413.9H1301.3" stroke="#f0f0f0" stroke-width="1"/>
<path d="M391.8 402.3H1301.3" stroke="#f0f0f0" stroke-width="1"/>
<path d="M391.8 390.7H1301.3" stroke="#dcdcdc" stroke-width="1.4"/>
<path d="M391.8 379.1H1301.3" stroke="#f0f0f0" stroke-width="1"/>
<path d="M391.8 367.5H1301.3" stroke="#f0f0f0" stroke-width="1"/>
<path d="M391.8 356.0H1301.3" stroke="#f0f0f0" stroke-width="1"/>
<path d="M391.8 344.4H1301.3" stroke="#f0f0f0" stroke-width="1"/>
<path d="M391.8 332.8H1301.3" stroke="#dcdcdc" stroke-width="1.4"/>
<path d="M391.8 332.8V622.3" stroke="#ececec" stroke-width="1" stroke-dasharray="5 1.5"/>
<path d="M482.8 332.8V622.3" stroke="#ececec" stroke-width="1" stroke-dasharray="5 1.5"/>
<path d="M573.7 332.8V622.3" stroke="#ececec" stroke-width="1" stroke-dasharray="5 1.5"/>
<path d="M664.7 332.8V622.3" stroke="#ececec" stroke-width="1" stroke-dasharray="5 1.5"/>
<path d="M755.6 332.8V622.3" stroke="#ececec" stroke-width="1" stroke-dasharray="5 1.5"/>
<path d="M846.5 332.8V622.3" stroke="#ececec" stroke-width="1" stroke-dasharray="5 1.5"/>
<path d="M937.5 332.8V622.3" stroke="#ececec" stroke-width="1" stroke-dasharray="5 1.5"/>
<path d="M1028.5 332.8V622.3" stroke="#ececec" stroke-width="1" stroke-dasharray="5 1.5"/>
<path d="M1119.4 332.8V622.3" stroke="#ececec" stroke-width="1" stroke-dasharray="5 1.5"/>
<path d="M1210.4 332.8V622.3" stroke="#ececec" stroke-width="1" stroke-dasharray="5 1.5"/>
<path d="M1301.3 332.8V622.3" stroke="#ececec" stroke-width="1" stroke-dasharray="5 1.5"/>
<path d="M391.8 622.3H1301.3" stroke="#b4b4b4" stroke-width="1.2"/>
<path d="M391.8 622.3v5" stroke="#b4b4b4" stroke-width="1"/>
<path d="M482.8 622.3v5" stroke="#b4b4b4" stroke-width="1"/>
<path d="M573.7 622.3v5" stroke="#b4b4b4" stroke-width="1"/>
<path d="M664.7 622.3v5" stroke="#b4b4b4" stroke-width="1"/>
<path d="M755.6 622.3v5" stroke="#b4b4b4" stroke-width="1"/>
<path d="M846.5 622.3v5" stroke="#b4b4b4" stroke-width="1"/>
<path d="M937.5 622.3v5" stroke="#b4b4b4" stroke-width="1"/>
<path d="M1028.5 622.3v5" stroke="#b4b4b4" stroke-width="1"/>
<path d="M1119.4 622.3v5" stroke="#b4b4b4" stroke-width="1"/>
<path d="M1210.4 622.3v5" stroke="#b4b4b4" stroke-width="1"/>
<path d="M1301.3 622.3v5" stroke="#b4b4b4" stroke-width="1"/>
<text x="392" y="344.8" text-anchor="end" font-family="Liberation Sans" font-size="10.6" fill="#9c9c9c" letter-spacing="0.55">20M</text>
<text x="392" y="402.7" text-anchor="end" font-family="Liberation Sans" font-size="10.6" fill="#9c9c9c" letter-spacing="0.55">15M</text>
<text x="392" y="460.6" text-anchor="end" font-family="Liberation Sans" font-size="10.6" fill="#9c9c9c" letter-spacing="0.55">10M</text>
<text x="392" y="518.5" text-anchor="end" font-family="Liberation Sans" font-size="10.6" fill="#9c9c9c" letter-spacing="0.55">5M</text>
<text x="392" y="576.4" text-anchor="end" font-family="Liberation Sans" font-size="10.6" fill="#9c9c9c" letter-spacing="0.55">0M</text>
<text x="392" y="634.3" text-anchor="end" font-family="Liberation Sans" font-size="10.6" fill="#9c9c9c" letter-spacing="0.55">−5M</text>
<path d="M437.3 559.9C437.3 559.9 491.8 564.4 528.2 564.4C564.6 564.4 582.8 564.4 619.2 564.4C655.6 564.4 673.7 553.5 710.1 535.0C746.5 516.5 764.7 471.8 801.1 471.8C837.5 471.8 855.6 564.4 892.0 564.4C928.4 564.4 946.6 561.3 983.0 561.3C1019.4 561.3 1037.5 579.8 1073.9 579.8C1110.3 579.8 1128.5 564.4 1164.9 564.4C1201.3 564.4 1255.8 564.4 1255.8 564.4L1255.8 564.4L437.3 564.4Z" fill="#33b13a" fill-opacity="0.15"/><path d="M437.3 559.9C437.3 559.9 491.8 564.4 528.2 564.4C564.6 564.4 582.8 564.4 619.2 564.4C655.6 564.4 673.7 553.5 710.1 535.0C746.5 516.5 764.7 471.8 801.1 471.8C837.5 471.8 855.6 564.4 892.0 564.4C928.4 564.4 946.6 561.3 983.0 561.3C1019.4 561.3 1037.5 579.8 1073.9 579.8C1110.3 579.8 1128.5 564.4 1164.9 564.4C1201.3 564.4 1255.8 564.4 1255.8 564.4" fill="none" stroke="#33b13a" stroke-width="2" stroke-linejoin="round" stroke-linecap="round"/>
<path d="M437.3 560.9C437.3 560.9 491.8 564.4 528.2 564.4C564.6 564.4 582.8 564.4 619.2 564.4C655.6 564.4 673.7 523.9 710.1 523.9C746.5 523.9 764.7 545.9 801.1 554.0C837.5 562.1 855.6 564.4 892.0 564.4C928.4 564.4 946.6 564.4 983.0 560.9C1019.4 557.5 1037.5 487.4 1073.9 487.4C1110.3 487.4 1128.5 564.4 1164.9 564.4C1201.3 564.4 1255.8 564.4 1255.8 564.4L1255.8 564.4L437.3 564.4Z" fill="#4b5b58" fill-opacity="0.15"/><path d="M437.3 560.9C437.3 560.9 491.8 564.4 528.2 564.4C564.6 564.4 582.8 564.4 619.2 564.4C655.6 564.4 673.7 523.9 710.1 523.9C746.5 523.9 764.7 545.9 801.1 554.0C837.5 562.1 855.6 564.4 892.0 564.4C928.4 564.4 946.6 564.4 983.0 560.9C1019.4 557.5 1037.5 487.4 1073.9 487.4C1110.3 487.4 1128.5 564.4 1164.9 564.4C1201.3 564.4 1255.8 564.4 1255.8 564.4" fill="none" stroke="#4b5b58" stroke-width="2" stroke-linejoin="round" stroke-linecap="round"/>
<path d="M437.3 557.5C437.3 557.5 491.8 564.4 528.2 564.4C564.6 564.4 582.8 564.4 619.2 564.4C655.6 564.4 673.7 488.6 710.1 484.5C746.5 480.4 764.7 480.4 801.1 480.4C837.5 480.4 855.6 564.4 892.0 564.4C928.4 564.4 946.6 564.4 983.0 558.0C1019.4 551.7 1037.5 441.7 1073.9 441.7C1110.3 441.7 1128.5 564.4 1164.9 564.4C1201.3 564.4 1255.8 564.4 1255.8 564.4L1255.8 564.4L437.3 564.4Z" fill="#9b9b9b" fill-opacity="0.15"/><path d="M437.3 557.5C437.3 557.5 491.8 564.4 528.2 564.4C564.6 564.4 582.8 564.4 619.2 564.4C655.6 564.4 673.7 488.6 710.1 484.5C746.5 480.4 764.7 480.4 801.1 480.4C837.5 480.4 855.6 564.4 892.0 564.4C928.4 564.4 946.6 564.4 983.0 558.0C1019.4 551.7 1037.5 441.7 1073.9 441.7C1110.3 441.7 1128.5 564.4 1164.9 564.4C1201.3 564.4 1255.8 564.4 1255.8 564.4" fill="none" stroke="#9b9b9b" stroke-width="2" stroke-linejoin="round" stroke-linecap="round"/>
<path d="M437.3 547.6C437.3 547.6 491.8 564.4 528.2 564.4C564.6 564.4 582.8 564.4 619.2 564.4C655.6 564.4 673.7 420.2 710.1 420.2C746.5 420.2 764.7 422.7 801.1 451.5C837.5 480.3 855.6 564.4 892.0 564.4C928.4 564.4 946.6 564.4 983.0 547.6C1019.4 530.8 1037.5 360.0 1073.9 360.0C1110.3 360.0 1128.5 564.4 1164.9 564.4C1201.3 564.4 1255.8 564.4 1255.8 564.4L1255.8 564.4L437.3 564.4Z" fill="#41b6e6" fill-opacity="0.15"/><path d="M437.3 547.6C437.3 547.6 491.8 564.4 528.2 564.4C564.6 564.4 582.8 564.4 619.2 564.4C655.6 564.4 673.7 420.2 710.1 420.2C746.5 420.2 764.7 422.7 801.1 451.5C837.5 480.3 855.6 564.4 892.0 564.4C928.4 564.4 946.6 564.4 983.0 547.6C1019.4 530.8 1037.5 360.0 1073.9 360.0C1110.3 360.0 1128.5 564.4 1164.9 564.4C1201.3 564.4 1255.8 564.4 1255.8 564.4" fill="none" stroke="#41b6e6" stroke-width="2" stroke-linejoin="round" stroke-linecap="round"/>
<path d="M437.3 563.5C437.3 563.5 491.8 564.4 528.2 564.4C564.6 564.4 582.8 564.4 619.2 564.4C655.6 564.4 673.7 564.4 710.1 564.1C746.5 563.7 764.7 554.0 801.1 554.0C837.5 554.0 855.6 564.4 892.0 564.4C928.4 564.4 946.6 564.4 983.0 563.5C1019.4 562.5 1037.5 554.2 1073.9 554.2C1110.3 554.2 1128.5 564.4 1164.9 564.4C1201.3 564.4 1255.8 564.4 1255.8 564.4L1255.8 564.4L437.3 564.4Z" fill="#e8641a" fill-opacity="0.15"/><path d="M437.3 563.5C437.3 563.5 491.8 564.4 528.2 564.4C564.6 564.4 582.8 564.4 619.2 564.4C655.6 564.4 673.7 564.4 710.1 564.1C746.5 563.7 764.7 554.0 801.1 554.0C837.5 554.0 855.6 564.4 892.0 564.4C928.4 564.4 946.6 564.4 983.0 563.5C1019.4 562.5 1037.5 554.2 1073.9 554.2C1110.3 554.2 1128.5 564.4 1164.9 564.4C1201.3 564.4 1255.8 564.4 1255.8 564.4" fill="none" stroke="#e8641a" stroke-width="2" stroke-linejoin="round" stroke-linecap="round"/>
<path d="M801.1 554.0C801.1 554.0 855.6 554.0 892.0 554.0C928.4 554.0 946.6 554.0 983.0 554.0C1019.4 554.0 1037.5 543.2 1073.9 543.2C1110.3 543.2 1128.5 543.2 1164.9 543.2C1201.3 543.2 1255.8 543.2 1255.8 543.2L1255.8 564.4L801.1 564.4Z" fill="#0096d8" fill-opacity="0.15"/><path d="M801.1 554.0C801.1 554.0 855.6 554.0 892.0 554.0C928.4 554.0 946.6 554.0 983.0 554.0C1019.4 554.0 1037.5 543.2 1073.9 543.2C1110.3 543.2 1128.5 543.2 1164.9 543.2C1201.3 543.2 1255.8 543.2 1255.8 543.2" fill="none" stroke="#0096d8" stroke-width="2" stroke-linejoin="round" stroke-linecap="round"/>
<path d="M437.3 565.4H1255.8" stroke="#cfbcec" stroke-width="1"/><path d="M731.5 565.1H779" stroke="#6736b4" stroke-width="2"/><path d="M822 565.1H870" stroke="#6736b4" stroke-width="2"/><path d="M1005 565.1H1052.5" stroke="#6736b4" stroke-width="2"/><path d="M1095 565.1H1140" stroke="#6736b4" stroke-width="2"/><path d="M619.2 564.7H689.1" stroke="#ff5a00" stroke-width="1.6"/>
<path d="M437.3 554.9L442.3 559.9L437.3 564.9L432.3 559.9Z" fill="#33b13a"/><path d="M433.3 553.5L441.3 553.5L437.3 561.5Z" fill="#9b9b9b"/><path d="M437.3 542.6L442.3 552.6L432.3 552.6Z" fill="#41b6e6"/><rect x="433.3" y="559.5" width="8" height="8" fill="#e8641a"/><path d="M528.2 559.4L533.2 564.4L528.2 569.4L523.2 564.4Z" fill="#33b13a"/><path d="M524.2 560.4L532.2 560.4L528.2 568.4Z" fill="#9b9b9b"/><path d="M528.2 559.4L533.2 569.4L523.2 569.4Z" fill="#41b6e6"/><rect x="523.2" y="559.4" width="10" height="10" fill="#7a7a42"/><path d="M619.2 559.4L624.2 564.4L619.2 569.4L614.2 564.4Z" fill="#33b13a"/><path d="M615.2 560.4L623.2 560.4L619.2 568.4Z" fill="#9b9b9b"/><path d="M619.2 559.4L624.2 569.4L614.2 569.4Z" fill="#41b6e6"/><rect x="614.2" y="559.4" width="10" height="10" fill="#7a7a42"/><path d="M710.1 530.0L715.1 535.0L710.1 540.0L705.1 535.0Z" fill="#33b13a"/><path d="M706.1 480.5L714.1 480.5L710.1 488.5Z" fill="#9b9b9b"/><path d="M710.1 415.2L715.1 425.2L705.1 425.2Z" fill="#41b6e6"/><rect x="706.1" y="560.1" width="8" height="8" fill="#e8641a"/><path d="M801.1 466.8L806.1 471.8L801.1 476.8L796.1 471.8Z" fill="#33b13a"/><path d="M797.1 476.4L805.1 476.4L801.1 484.4Z" fill="#9b9b9b"/><path d="M801.1 446.5L806.1 456.5L796.1 456.5Z" fill="#41b6e6"/><rect x="797.1" y="550.0" width="8" height="8" fill="#8a7a4a"/><path d="M796.3 565.0A4.8 5.2 0 0 0 805.9 565.0Z" fill="#6736b4"/><path d="M892.0 559.4L897.0 564.4L892.0 569.4L887.0 564.4Z" fill="#33b13a"/><path d="M888.0 560.4L896.0 560.4L892.0 568.4Z" fill="#9b9b9b"/><path d="M892.0 559.4L897.0 569.4L887.0 569.4Z" fill="#41b6e6"/><rect x="887.0" y="559.4" width="10" height="10" fill="#1f7a5c"/><path d="M983.0 556.3L988.0 561.3L983.0 566.3L978.0 561.3Z" fill="#33b13a"/><path d="M979.0 554.0L987.0 554.0L983.0 562.0Z" fill="#9b9b9b"/><path d="M983.0 542.6L988.0 552.6L978.0 552.6Z" fill="#41b6e6"/><rect x="979.0" y="559.5" width="8" height="8" fill="#e8641a"/><path d="M1073.9 574.8L1078.9 579.8L1073.9 584.8L1068.9 579.8Z" fill="#33b13a"/><path d="M1069.9 437.7L1077.9 437.7L1073.9 445.7Z" fill="#9b9b9b"/><path d="M1073.9 355.0L1078.9 365.0L1068.9 365.0Z" fill="#41b6e6"/><rect x="1069.9" y="550.2" width="8" height="8" fill="#8a7a4a"/><path d="M1069.1 565.0A4.8 5.2 0 0 0 1078.7 565.0Z" fill="#6736b4"/><path d="M1164.9 559.4L1169.9 564.4L1164.9 569.4L1159.9 564.4Z" fill="#33b13a"/><path d="M1160.9 560.4L1168.9 560.4L1164.9 568.4Z" fill="#9b9b9b"/><path d="M1164.9 559.4L1169.9 569.4L1159.9 569.4Z" fill="#41b6e6"/><rect x="1159.9" y="559.4" width="10" height="10" fill="#1f7a5c"/><path d="M1255.8 559.4L1260.8 564.4L1255.8 569.4L1250.8 564.4Z" fill="#33b13a"/><path d="M1251.8 560.4L1259.8 560.4L1255.8 568.4Z" fill="#9b9b9b"/><path d="M1255.8 559.4L1260.8 569.4L1250.8 569.4Z" fill="#41b6e6"/><rect x="1250.8" y="559.4" width="10" height="10" fill="#1f7a5c"/><path d="M892.0 549.0L897.0 554.0L892.0 559.0L887.0 554.0Z" fill="#0096d8"/><path d="M983.0 549.0L988.0 554.0L983.0 559.0L978.0 554.0Z" fill="#0096d8"/><path d="M1073.9 538.2L1078.9 543.2L1073.9 548.2L1068.9 543.2Z" fill="#0096d8"/><path d="M1164.9 538.2L1169.9 543.2L1164.9 548.2L1159.9 543.2Z" fill="#0096d8"/><path d="M1255.8 538.2L1260.8 543.2L1255.8 548.2L1250.8 543.2Z" fill="#0096d8"/><rect x="796.6" y="549.5" width="9.0" height="9.0" fill="#7d7a4a"/>
<rect x="432.3" y="565.6" width="10" height="3.4" fill="#ff5a00"/><rect x="705.1" y="565.6" width="10" height="3.4" fill="#ff5a00"/><rect x="978.0" y="565.6" width="10" height="3.4" fill="#ff5a00"/><rect x="416.0" y="553.7" width="42.6" height="10.7" fill="#ff5a00" stroke="#f3f3f3" stroke-width="1"/>
<rect x="688.8" y="472.6" width="42.6" height="91.8" fill="#ff5a00" stroke="#f3f3f3" stroke-width="1"/>
<rect x="961.7" y="553.1" width="42.6" height="11.3" fill="#ff5a00" stroke="#f3f3f3" stroke-width="1"/>
<rect x="1052.6" y="347.0" width="42.6" height="217.4" fill="#ff5a00" stroke="#f3f3f3" stroke-width="1"/>
<path d="M437.3 549.2C437.3 549.2 491.8 564.4 528.2 564.4C564.6 564.4 582.8 564.4 619.2 564.4C655.6 564.4 673.7 443.2 710.1 443.2C746.5 443.2 764.7 447.5 801.1 471.8C837.5 496.0 855.6 564.4 892.0 564.4C928.4 564.4 946.6 564.4 983.0 549.9C1019.4 535.4 1037.5 361.8 1073.9 361.8C1110.3 361.8 1128.5 564.4 1164.9 564.4C1201.3 564.4 1255.8 564.4 1255.8 564.4L1255.8 564.4L437.3 564.4Z" fill="#007b5f" fill-opacity="0.15"/><path d="M437.3 549.2C437.3 549.2 491.8 564.4 528.2 564.4C564.6 564.4 582.8 564.4 619.2 564.4C655.6 564.4 673.7 443.2 710.1 443.2C746.5 443.2 764.7 447.5 801.1 471.8C837.5 496.0 855.6 564.4 892.0 564.4C928.4 564.4 946.6 564.4 983.0 549.9C1019.4 535.4 1037.5 361.8 1073.9 361.8C1110.3 361.8 1128.5 564.4 1164.9 564.4C1201.3 564.4 1255.8 564.4 1255.8 564.4" fill="none" stroke="#007b5f" stroke-width="2" stroke-linejoin="round" stroke-linecap="round"/>
<path d="M437.3 544.2L442.3 554.2L432.3 554.2Z" fill="#007b5f"/><path d="M528.2 559.4L533.2 569.4L523.2 569.4Z" fill="#007b5f"/><path d="M619.2 559.4L624.2 569.4L614.2 569.4Z" fill="#007b5f"/><path d="M710.1 438.2L715.1 448.2L705.1 448.2Z" fill="#007b5f"/><path d="M801.1 466.8L806.1 476.8L796.1 476.8Z" fill="#007b5f"/><path d="M892.0 559.4L897.0 569.4L887.0 569.4Z" fill="#007b5f"/><path d="M983.0 544.9L988.0 554.9L978.0 554.9Z" fill="#007b5f"/><path d="M1073.9 356.8L1078.9 366.8L1068.9 366.8Z" fill="#007b5f"/><path d="M1164.9 559.4L1169.9 569.4L1159.9 569.4Z" fill="#007b5f"/><path d="M1255.8 559.4L1260.8 569.4L1250.8 569.4Z" fill="#007b5f"/>
<text transform="translate(438.6 635.4) rotate(-45)" text-anchor="end" font-family="Liberation Sans" font-size="11" textLength="38.5" lengthAdjust="spacing" fill="#989898" stroke="#989898" stroke-width="0.3">Angola</text>
<text transform="translate(529.5 635.4) rotate(-45)" text-anchor="end" font-family="Liberation Sans" font-size="11" textLength="47.9" lengthAdjust="spacing" fill="#989898" stroke="#989898" stroke-width="0.3">Australia</text>
<text transform="translate(620.5 635.4) rotate(-45)" text-anchor="end" font-family="Liberation Sans" font-size="11" textLength="50.4" lengthAdjust="spacing" fill="#989898" stroke="#989898" stroke-width="0.3">Botswana</text>
<text transform="translate(711.4 635.4) rotate(-45)" text-anchor="end" font-family="Liberation Sans" font-size="11" textLength="70.5" lengthAdjust="spacing" fill="#989898" stroke="#989898" stroke-width="0.3">Deutschland</text>
<text transform="translate(802.4 635.4) rotate(-45)" text-anchor="end" font-family="Liberation Sans" font-size="11" textLength="38.6" lengthAdjust="spacing" fill="#989898" stroke="#989898" stroke-width="0.3">España</text>
<text transform="translate(893.3 635.4) rotate(-45)" text-anchor="end" font-family="Liberation Sans" font-size="11" textLength="36.9" lengthAdjust="spacing" fill="#989898" stroke="#989898" stroke-width="0.3">France</text>
<text transform="translate(984.3 635.4) rotate(-45)" text-anchor="end" font-family="Liberation Sans" font-size="11" textLength="47.6" lengthAdjust="spacing" fill="#989898" stroke="#989898" stroke-width="0.3">Portugal</text>
<text transform="translate(1075.2 635.4) rotate(-45)" text-anchor="end" font-family="Liberation Sans" font-size="11" textLength="22.5" lengthAdjust="spacing" fill="#989898" stroke="#989898" stroke-width="0.3">USA</text>
<text transform="translate(1166.2 635.4) rotate(-45)" text-anchor="end" font-family="Liberation Sans" font-size="11" textLength="68.5" lengthAdjust="spacing" fill="#989898" stroke="#989898" stroke-width="0.3">South Africa</text>
<text transform="translate(1257.1 635.4) rotate(-45)" text-anchor="end" font-family="Liberation Sans" font-size="11" textLength="54.9" lengthAdjust="spacing" fill="#989898" stroke="#989898" stroke-width="0.3">Zimbabwe</text>
<defs><linearGradient id="hb" x1="0" y1="0" x2="0" y2="1"><stop offset="0" stop-color="#5e5e5e"/><stop offset="1" stop-color="#333"/></linearGradient></defs>
<rect x="1278.4" y="333.6" width="24" height="22" rx="2.5" fill="url(#hb)" stroke="#1c1c1c" stroke-width="1.6"/>
<path d="M1283 339.6H1298.6M1283 344.6H1298.6M1283 349.6H1298.6" stroke="#e4e4e4" stroke-width="2.6" stroke-linecap="round"/>
<rect x="892.5" y="349.5" width="146" height="56" fill="#4a4a4a" stroke="#1f6f5c" stroke-width="1"/>
<text x="897" y="367" font-family="Liberation Sans" font-size="11.6" fill="#fff" textLength="94.5" lengthAdjust="spacing">Achieved Year N</text>
<text x="897" y="382.5" font-family="Liberation Sans" font-size="11.2" fill="#fff" letter-spacing="0.1">USA:</text>
<text x="929" y="382.5" font-family="Liberation Sans" font-size="12.6" font-weight="bold" fill="#fff" textLength="103" lengthAdjust="spacing">17 502 950.50</text>
<text x="897" y="396.5" font-family="Liberation Sans" font-size="9.8" font-style="italic" fill="#fff" textLength="89.5" lengthAdjust="spacing">Click to drill down</text>
</svg>
<div id="taskbar" class="abs"></div>
<svg style="left:0;top:668px" width="1358" height="39" viewBox="0 668 1358 39">
<defs>
<linearGradient id="tbg" x1="0" x2="1" y1="0" y2="0"><stop offset="0" stop-color="#8ea6c6"/><stop offset="0.035" stop-color="#8fa5c4"/><stop offset="0.05" stop-color="#9fa9ba"/><stop offset="0.075" stop-color="#afc6e4"/><stop offset="0.12" stop-color="#a8c0de"/><stop offset="0.805" stop-color="#a6bedb"/><stop offset="0.83" stop-color="#95a9c6"/><stop offset="0.848" stop-color="#8898b1"/><stop offset="1" stop-color="#8999b2"/></linearGradient>
<linearGradient id="btn" x1="0" y1="0" x2="0" y2="1"><stop offset="0" stop-color="#d3def0"/><stop offset="0.45" stop-color="#c3d2ea"/><stop offset="0.5" stop-color="#b3c6e2"/><stop offset="1" stop-color="#b9cce8"/></linearGradient>
<linearGradient id="btn2" x1="0" y1="0" x2="0" y2="1"><stop offset="0" stop-color="#c3d3ec"/><stop offset="0.45" stop-color="#b4c8e4"/><stop offset="0.5" stop-color="#a6bcdc"/><stop offset="1" stop-color="#aac0e0"/></linearGradient>
<radialGradient id="orb" cx="0.5" cy="0.35" r="0.7"><stop offset="0" stop-color="#6fb2e6"/><stop offset="0.55" stop-color="#2a6fb8"/><stop offset="1" stop-color="#123a74"/></radialGradient>
</defs>
<rect x="0" y="677" width="1358" height="30" fill="url(#tbg)"/>
<rect x="0" y="676.8" width="1358" height="1.3" fill="#3e4c63"/>
<rect x="0" y="678.1" width="1358" height="1" fill="#c6d6ec" opacity=".6"/>
<!-- orb -->
<circle cx="26.9" cy="690.2" r="18" fill="url(#orb)" stroke="#173a72" stroke-width="1.2"/>
<ellipse cx="26.9" cy="680.6" rx="13" ry="7.5" fill="#bfe0f7" opacity=".4"/>
<path d="M18.2 683.3Q22.2 681 25.9 683L24.6 689.4Q21.1 687.6 17 689.6Z" fill="#f0552a"/>
<path d="M27.9 683.4Q31.7 685.4 36.1 683.2L34.7 689.6Q30.7 691.6 26.6 689.7Z" fill="#8cc63e"/>
<path d="M16.5 691.6Q20.5 689.6 24.2 691.5L22.9 697.8Q19.3 695.8 15.3 698Z" fill="#3a9be0"/>
<path d="M26.2 691.8Q30.1 693.8 34.3 691.7L33 698Q29.1 700 24.9 698.1Z" fill="#fbc024"/>
<!-- outlook -->
<rect x="80" y="686.4" width="9" height="11" fill="#fff" stroke="#1c5fb6" stroke-width="1.2"/>
<path d="M80.6 688.6L84.5 692L88.4 688.6" fill="none" stroke="#1c5fb6" stroke-width="1"/>
<path d="M73.4 685.4L83 683.8V700.2L73.4 698.6Z" fill="#0f66c4"/>
<ellipse cx="78.2" cy="692" rx="2.5" ry="3.5" fill="none" stroke="#fff" stroke-width="1.5"/>
<!-- IE button -->
<rect x="105.5" y="678.6" width="42.5" height="27.4" rx="3" fill="url(#btn)" stroke="#5e6e86" stroke-width="1"/>
<rect x="106.5" y="679.6" width="40.5" height="25.4" rx="2.3" fill="none" stroke="#eaf1fb" stroke-width="1" opacity=".9"/>
<circle cx="127.5" cy="692.2" r="6.6" fill="none" stroke="#2f86d6" stroke-width="3"/>
<rect x="122" y="691.2" width="11.5" height="2.2" fill="#2f86d6"/>
<path d="M130 696L136 693V698Z" fill="#c3d2ea"/>
<ellipse cx="127" cy="691.5" rx="11" ry="4.2" transform="rotate(-28 127 691.5)" fill="none" stroke="#f1c232" stroke-width="1.6"/>
<!-- firefox -->
<circle cx="173" cy="692.2" r="7.5" fill="#e9711c"/>
<path d="M167 688.4Q171 684.4 176 685.6Q173 687 172.6 689.4Q170 690.6 167.6 690.2Z" fill="#3d4fa8"/>
<path d="M166 690.6Q165.2 696 169.4 698.6Q174 700.6 178.4 697.6Q180.6 695 180.4 691.6Q178.6 695.6 174.6 696.4Q170.6 696.6 168.6 693.2Z" fill="#f6b02a"/>
<!-- chrome button (active) -->
<rect x="197.5" y="678.6" width="43" height="27.4" rx="3" fill="url(#btn)" stroke="#5e6e86" stroke-width="1"/>
<rect x="198.5" y="679.6" width="41" height="25.4" rx="2.3" fill="none" stroke="#f2f6fc" stroke-width="1"/>
<circle cx="218.7" cy="692.2" r="7.2" fill="#dd4b3e"/>
<path d="M218.7 692.2L212.4 688.7A7.2 7.2 0 0 0 218.9 699.4L222.2 693.6Z" fill="#2ea05a"/>
<path d="M218.7 692.2L222.2 693.6L218.9 699.4A7.2 7.2 0 0 0 225.2 689L218.7 689Z" fill="#f7cf3c"/>
<circle cx="218.7" cy="692.2" r="3.3" fill="#fff"/><circle cx="218.7" cy="692.2" r="2.5" fill="#3f82e0"/>
<!-- button 2 -->
<rect x="243.5" y="678.6" width="43" height="27.4" rx="3" fill="url(#btn2)" stroke="#5e6e86" stroke-width="1"/>
<rect x="244.5" y="679.6" width="41" height="25.4" rx="2.3" fill="none" stroke="#dfe9f8" stroke-width="1"/>
<rect x="258" y="684.2" width="7" height="6" fill="#f2c832" stroke="#b98a1a" stroke-width=".7"/>
<rect x="265.5" y="684.8" width="7" height="6.5" fill="#f4d24a" stroke="#b98a1a" stroke-width=".7"/>
<rect x="261" y="690.6" width="6.5" height="6" fill="#a7b64a" stroke="#8a8a2a" stroke-width=".7"/>
<rect x="266" y="691.6" width="7" height="7" fill="#f29a1e" stroke="#b9741a" stroke-width=".7"/>
<!-- button 3 -->
<rect x="289.5" y="678.6" width="43" height="27.4" rx="3" fill="url(#btn2)" stroke="#5e6e86" stroke-width="1"/>
<rect x="290.5" y="679.6" width="41" height="25.4" rx="2.3" fill="none" stroke="#dfe9f8" stroke-width="1"/>
<circle cx="312" cy="690.6" r="6.6" fill="#3a9ae6"/><path d="M307 695L306.4 699.4L311 696.6Z" fill="#3a9ae6"/>
<circle cx="312.4" cy="690.4" r="3.6" fill="none" stroke="#bfe2fa" stroke-width="1.3"/>
<circle cx="304.8" cy="691.6" r="2.4" fill="#6fbaf0" opacity=".8"/><circle cx="319.5" cy="692" r="2" fill="#6fbaf0" opacity=".7"/>
<!-- button 4 -->
<rect x="335.5" y="678.6" width="43" height="27.4" rx="3" fill="url(#btn2)" stroke="#5e6e86" stroke-width="1"/>
<rect x="336.5" y="679.6" width="41" height="25.4" rx="2.3" fill="none" stroke="#dfe9f8" stroke-width="1"/>
<rect x="359" y="685.4" width="8" height="11.6" fill="#fff" stroke="#d24a26" stroke-width="1.3"/>
<path d="M361.4 688.4H365.4M361.4 691H365.4M361.4 693.6H365.4" stroke="#d24a26" stroke-width="1.2"/>
<path d="M349.6 685L361 683.4V699.6L349.6 698Z" fill="#d24a26"/>
<path d="M353.4 696V687.6H356Q358.4 687.8 358.4 690Q358.4 692.4 356 692.4H353.6" fill="none" stroke="#fff" stroke-width="1.6"/>
<!-- tray -->
<path d="M1159 695.4L1162.8 691.2L1166.6 695.4Z" fill="#fff"/>
<path d="M1158.6 696H1167" stroke="#6a7890" stroke-width="1" opacity=".7"/>
<rect x="1180.3" y="687.4" width="7.4" height="12" rx="1.4" fill="none" stroke="#39424f" stroke-width="3" opacity=".55"/>
<rect x="1180.3" y="687.4" width="7.4" height="12" rx="1.4" fill="none" stroke="#fff" stroke-width="1.7"/>
<path d="M1184.4 689.6H1192.4V692.8Q1192.4 696 1188.4 696Q1184.4 696 1184.4 692.8Z" fill="#fff" stroke="#39424f" stroke-width="1"/>
<path d="M1186.3 685.6V689.6M1190.5 685.6V689.6" stroke="#39424f" stroke-width="2.6"/>
<path d="M1186.3 685.8V689.8M1190.5 685.8V689.8" stroke="#fff" stroke-width="1.5"/>
<path d="M1188.4 696V700.4" stroke="#39424f" stroke-width="3" opacity=".6"/>
<path d="M1188.4 696V700.4" stroke="#fff" stroke-width="1.8"/>
<g fill="#fff" stroke="#3f4856" stroke-width=".7"><rect x="1203.6" y="695.6" width="2.6" height="2.8"/><rect x="1206.8" y="693.4" width="2.6" height="5"/><rect x="1210" y="691" width="2.6" height="7.4"/><rect x="1213.2" y="688.6" width="2.6" height="9.8"/><rect x="1216.4" y="686.8" width="2.6" height="11.6"/></g>
<path d="M1228 690H1230.8L1235 685.8V699.6L1230.8 695.4H1228Z" fill="#fff" stroke="#4b5563" stroke-width=".8"/>
<path d="M1237 689.4Q1239 692.8 1237 696.2" fill="none" stroke="#d6dde6" stroke-width="1.3"/><path d="M1239.6 687.2Q1243 692.8 1239.6 698.4" fill="none" stroke="#f2f5f9" stroke-width="1.4"/>
<path d="M1255 685.6L1259 688.2L1255 690.8L1251 688.2Z M1263 685.6L1267 688.2L1263 690.8L1259 688.2Z M1255 690.8L1259 693.4L1255 696L1251 693.4Z M1263 690.8L1267 693.4L1263 696L1259 693.4Z M1259 694.2L1262.6 696.6L1259 699L1255.4 696.6Z" fill="#4a9fe6"/>
<path d="M1255 685.6L1259 688.2L1255 690.8Z M1263 685.6L1267 688.2L1263 690.8Z" fill="#9fd0f6" opacity=".8"/>
<circle cx="1263.8" cy="696.8" r="3.5" fill="#2f9a35" stroke="#d9efd9" stroke-width=".5"/>
<path d="M1262 696.8L1263.4 698.2L1265.8 695.4" fill="none" stroke="#fff" stroke-width="1"/>
<text x="1288.4" y="697" font-family="Liberation Sans" font-size="11.9" fill="#fff" letter-spacing="-0.2">1:15 PM</text>
<!-- show desktop -->
<linearGradient id="sd" x1="0" y1="0" x2="0" y2="1"><stop offset="0" stop-color="#a4aebb"/><stop offset="0.3" stop-color="#707d8d"/><stop offset="0.45" stop-color="#596777"/><stop offset="0.8" stop-color="#64717f"/><stop offset="1" stop-color="#8b97a5"/></linearGradient>
<rect x="1345" y="678" width="13" height="29" fill="url(#sd)"/>
<rect x="1345" y="678" width="1" height="29" fill="#2c3646"/>
<rect x="1346" y="678" width="1" height="29" fill="#bcc7d3" opacity=".85"/>
</svg>
</body></html>
